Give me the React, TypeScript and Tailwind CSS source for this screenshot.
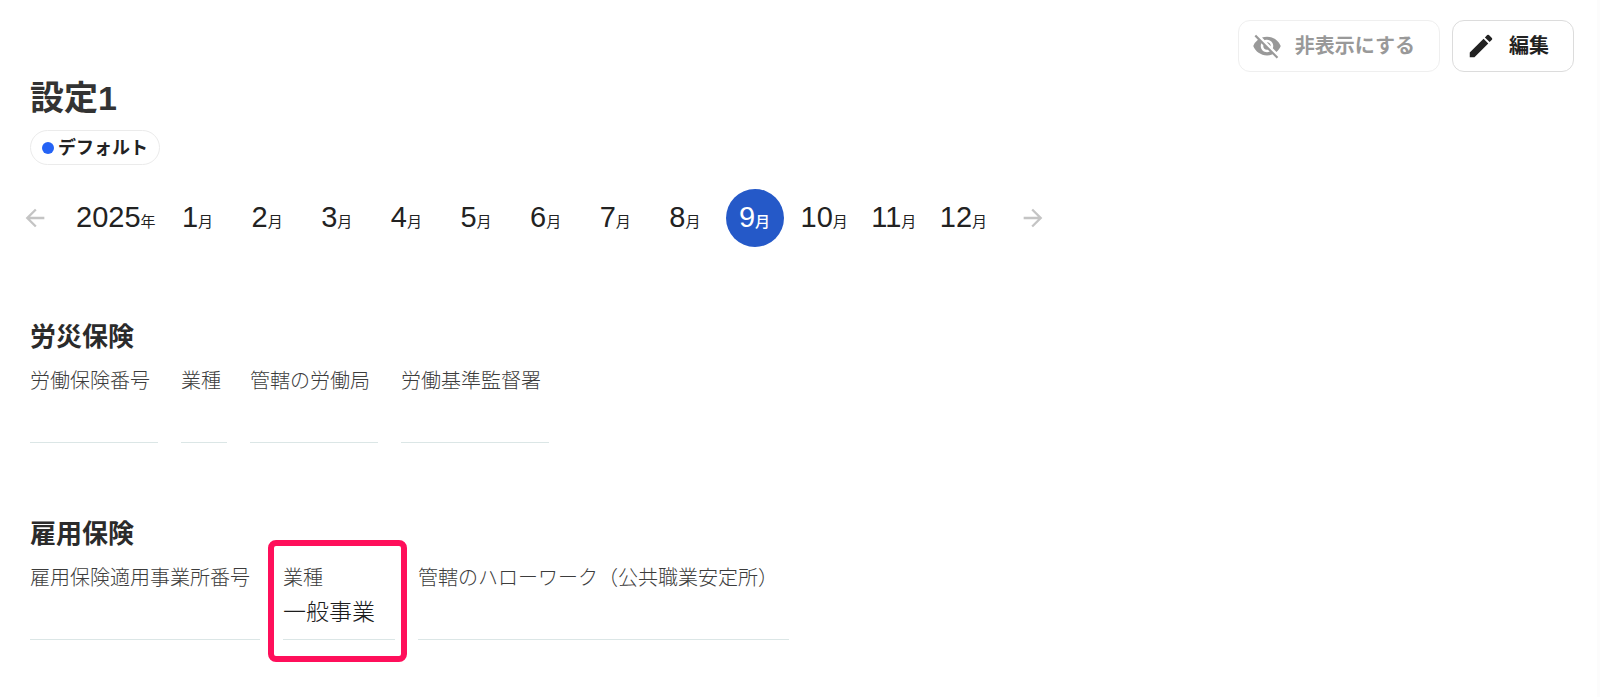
import { clsx } from 'clsx'
import { MdArrowBack, MdArrowForward, MdEdit, MdVisibilityOff } from 'react-icons/md'

interface Field {
  label: string
  width: string
  value?: string
  highlighted?: boolean
}

interface InsuranceSectionProps {
  title: string
  fields: Field[]
}

const months = [1, 2, 3, 4, 5, 6, 7, 8, 9, 10, 11, 12]
const selectedMonth = 9

const accidentFields: Field[] = [
  { label: '労働保険番号', width: 'w-[128px]' },
  { label: '業種', width: 'w-[46px]' },
  { label: '管轄の労働局', width: 'w-[128px]' },
  { label: '労働基準監督署', width: 'w-[148px]' },
]

const employmentFields: Field[] = [
  { label: '雇用保険適用事業所番号', width: 'w-[230px]' },
  { label: '業種', width: 'w-[112px]', value: '一般事業', highlighted: true },
  { label: '管轄のハローワーク（公共職業安定所）', width: 'w-[371px]' },
]

function InsuranceSection({ title, fields }: InsuranceSectionProps) {
  return (
    <section>
      <h2 className="font-bold text-[26px] text-[#2b2b2b] leading-8">{title}</h2>
      <dl className="mt-3 flex flex-wrap gap-[23px]">
        {fields.map((field) => (
          <div
            key={field.label}
            className={clsx(
              'relative flex h-[78px] flex-col whitespace-nowrap border-[#dbe6e6] border-b',
              field.width,
            )}
          >
            <dt className="font-light text-[#3c3c3c] text-xl leading-8">{field.label}</dt>
            <dd className="mt-0.5 font-light text-[#1c1c1c] text-[23px] leading-8">
              {field.value}
            </dd>
            {field.highlighted && (
              <span className="pointer-events-none absolute -top-[22px] -right-3 -bottom-[23px] -left-[15px] rounded-lg border-6 border-[#ff0f5b]" />
            )}
          </div>
        ))}
      </dl>
    </section>
  )
}

export default function App() {
  return (
    <main className="min-h-screen border-[#fcfcfc] border-r-3 bg-white pt-5 pr-[23px] pb-8 pl-[30px] font-['Liberation_Sans','Noto_Sans_CJK_JP',sans-serif] text-[#222222]">
      <div className="flex justify-end gap-3">
        <button
          type="button"
          disabled
          className="flex h-[52px] items-center gap-[13px] rounded-xl border border-[#efefef] pr-6 pl-[13px] font-bold text-[#999999] text-xl"
        >
          <MdVisibilityOff size={30} />
          非表示にする
        </button>
        <button
          type="button"
          className="flex h-[52px] items-center gap-[13px] rounded-xl border border-[#dcdcdc] pr-6 pl-[13px] font-bold text-[#222222] text-xl"
        >
          <MdEdit size={30} />
          編集
        </button>
      </div>

      <h1 className="mt-1 font-bold text-[#333333] text-[34px] leading-[44px]">設定1</h1>

      <span className="mt-[10px] inline-flex h-[35px] items-center gap-1 rounded-full border border-[#ebebeb] pr-[11px] pl-[11px] font-bold text-lg leading-6">
        <span className="size-3 rounded-full bg-[#2563f5]" />
        デフォルト
      </span>

      <nav className="-ml-[9px] mt-6 flex items-center">
        <button type="button" aria-label="前の年" className="text-[#c4c4c4]">
          <MdArrowBack size={28} />
        </button>
        <span className="ml-[27px] pt-0.5 text-[29px] leading-8">
          2025<span className="text-[15px]">年</span>
        </span>
        <ul className="ml-[13px] flex w-[824px] justify-between">
          {months.map((month) => (
            <li key={month}>
              <button
                type="button"
                className={clsx(
                  'size-[58px] whitespace-nowrap rounded-full pt-0.5 text-[29px] leading-8',
                  month === selectedMonth && 'bg-[#2559c8] text-white',
                )}
              >
                {month}
                <span className={clsx('text-[15px]', month === selectedMonth && 'font-medium')}>
                  月
                </span>
              </button>
            </li>
          ))}
        </ul>
        <button type="button" aria-label="次の年" className="ml-[26px] text-[#c4c4c4]">
          <MdArrowForward size={28} />
        </button>
      </nav>

      <div className="mt-[74px] flex flex-col gap-[75px]">
        <InsuranceSection title="労災保険" fields={accidentFields} />
        <InsuranceSection title="雇用保険" fields={employmentFields} />
      </div>
    </main>
  )
}
